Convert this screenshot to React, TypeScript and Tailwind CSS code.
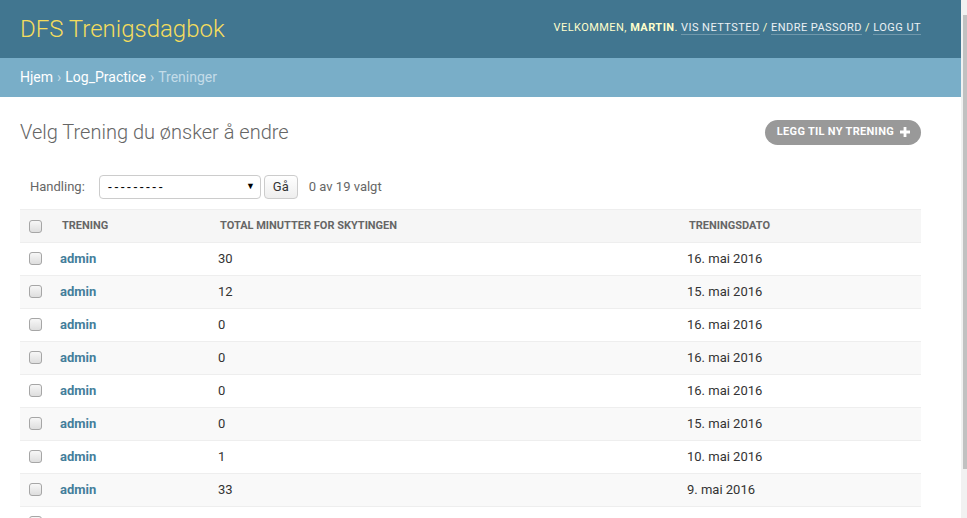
const ROWS = [
  { id: "r1", user: "admin", minutes: "30", date: "16. mai 2016" },
  { id: "r2", user: "admin", minutes: "12", date: "15. mai 2016" },
  { id: "r3", user: "admin", minutes: "0", date: "16. mai 2016" },
  { id: "r4", user: "admin", minutes: "0", date: "16. mai 2016" },
  { id: "r5", user: "admin", minutes: "0", date: "16. mai 2016" },
  { id: "r6", user: "admin", minutes: "0", date: "15. mai 2016" },
  { id: "r7", user: "admin", minutes: "1", date: "10. mai 2016" },
  { id: "r8", user: "admin", minutes: "33", date: "9. mai 2016" },
];

function Checkbox() {
  return (
    <span className="block w-[13px] h-[13px] rounded-[3px] border border-[#a6a6a6] bg-gradient-to-b from-[#f7f7f7] to-[#dedede]" />
  );
}

export default function App() {
  return (
    <div
      className="flex h-[518px] w-[967px] overflow-hidden bg-white text-[13px] text-[#333]"
      style={{ fontFamily: "Roboto, 'Liberation Sans', sans-serif" }}
    >
      <div className="w-[961px] shrink-0">
        {/* header */}
        <div className="flex h-[58px] items-center justify-between bg-[#417690] pl-5 pr-10">
          <h1 className="text-[24px] font-light text-[#f5dd5d]">DFS Trenigsdagbok</h1>
          <div className="text-[11px] uppercase tracking-[0.45px] text-[#ffc] pb-[1px]">
            Velkommen, <strong className="font-bold">Martin</strong>.{" "}
            <span className="border-b border-white/25 text-white/90">Vis nettsted</span> /{" "}
            <span className="border-b border-white/25 text-white/90">Endre passord</span> /{" "}
            <span className="border-b border-white/25 text-white/90">Logg ut</span>
          </div>
        </div>

        {/* breadcrumbs */}
        <div className="flex h-[39px] items-center bg-[#79aec8] px-5 text-[14px] text-[#c4dce8]">
          <span className="text-white">Hjem</span>
          <span className="mx-1">›</span>
          <span className="text-white">Log_Practice</span>
          <span className="mx-1">›</span>
          <span>Treninger</span>
        </div>

        {/* content */}
        <div className="pl-5 pr-10">
          <div className="flex h-[68px] items-center justify-between pt-[2px]">
            <h2 className="text-[20px] font-light text-[#666]">Velg Trening du ønsker å endre</h2>
            <div className="flex h-[25px] items-center gap-[6px] rounded-full bg-[#999] pl-[12px] pr-[11px] text-[11px] font-bold uppercase tracking-[0.3px] text-white">
              Legg til ny trening
              <svg width="10" height="10" viewBox="0 0 10 10">
                <path d="M3.6 0h2.8v3.6H10v2.8H6.4V10H3.6V6.4H0V3.6h3.6z" fill="#fff" />
              </svg>
            </div>
          </div>

          {/* actions */}
          <div className="flex h-[42px] items-center pl-[10px] pt-[1px]">
            <span className="text-[13px] text-[#666]">Handling:</span>
            <div className="ml-[14px] flex h-[24px] w-[162px] items-center justify-between rounded-[4px] border border-[#ccc] bg-white pl-[8px] pr-[5px] text-[13px] text-black">
              <span className="tracking-[2px]" style={{ fontFamily: "'Liberation Sans', sans-serif" }}>
                ---------
              </span>
              <span className="text-[9px]">▼</span>
            </div>
            <div className="ml-[3px] flex h-[24px] w-[34px] items-center justify-center rounded-[4px] border border-[#ccc] bg-gradient-to-b from-white to-[#eee] text-[13px] text-[#333]">
              Gå
            </div>
            <span className="ml-[11px] text-[13px] text-[#666]">0 av 19 valgt</span>
          </div>

          {/* table */}
          <table className="mt-[2px] w-[901px] table-fixed border-collapse">
            <colgroup>
              <col className="w-[32px]" />
              <col className="w-[158px]" />
              <col className="w-[469px]" />
              <col className="w-[242px]" />
            </colgroup>
            <thead>
              <tr className="h-[33px] border-y border-[#eee] bg-[#f6f6f6] text-left text-[11px] font-bold uppercase text-[#666]">
                <th className="pl-[9px]">
                  <Checkbox />
                </th>
                <th className="pl-[10px]">Trening</th>
                <th className="pl-[10px]">Total minutter for skytingen</th>
                <th className="pl-[10px]">Treningsdato</th>
              </tr>
            </thead>
            <tbody>
              {ROWS.map((r, i) => (
                <tr
                  key={r.id}
                  className={`h-[33px] border-b border-[#eee] ${i % 2 === 1 ? "bg-[#f9f9f9]" : "bg-white"}`}
                >
                  <td className="pl-[9px] align-top pt-[9px]">
                    <Checkbox />
                  </td>
                  <td className="pl-[8px] font-bold text-[#447e9b]">{r.user}</td>
                  <td className="pl-[8px]">{r.minutes}</td>
                  <td className="pl-[8px]">{r.date}</td>
                </tr>
              ))}
              <tr className="h-[33px]">
                <td className="pl-[9px] align-top pt-[9px]">
                  <Checkbox />
                </td>
                <td />
                <td />
                <td />
              </tr>
            </tbody>
          </table>
        </div>
      </div>

      {/* scrollbar */}
      <div className="flex w-[6px] shrink-0 justify-end bg-[#f1f1f1]">
        <div className="mt-[15px] h-[454px] w-[4px] bg-[#c1c1c1]" />
      </div>
    </div>
  );
}
